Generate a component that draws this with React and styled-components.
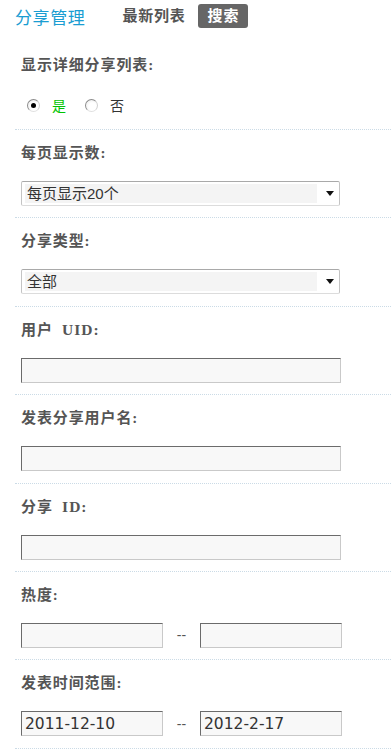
import React from "react";
import styled, { createGlobalStyle } from "styled-components";

const GlobalStyle = createGlobalStyle`
  body {
    margin: 0;
    background: #fff;
    font-family: "Liberation Sans", "Noto Sans CJK SC", sans-serif;
    color: #333;
  }
`;

const Page = styled.div`
  width: 391px;
`;

const Header = styled.div`
  display: flex;
  align-items: center;
  height: 32px;
  padding-left: 15px;
  margin-bottom: 9.6px;
`;

const Title = styled.div`
  font-size: 17px;
  color: #1a9dd2;
  margin-right: 37px;
  letter-spacing: 0.6px;
`;

const Tab = styled.div`
  font-size: 15px;
  font-weight: bold;
  line-height: 24px;
  height: 24px;
  letter-spacing: 0.8px;
  padding: 0 ${(p) => (p.active ? "9px 0 10px" : "0")};
  margin-right: 12px;
  border-radius: 3px;
  color: ${(p) => (p.active ? "#fff" : "#555")};
  background: ${(p) => (p.active ? "#666" : "transparent")};
`;

const Section = styled.div`
  margin-left: 15px;
  padding: 13px 0 11.4px 6px;
  border-bottom: 1px dotted #cbdbe6;
`;

const Label = styled.div`
  font-family: "Liberation Serif", "Noto Sans CJK SC", serif;
  font-size: 15px;
  font-weight: bold;
  line-height: 20px;
  color: #555;
  letter-spacing: 0.9px;
  margin-bottom: 18px;
  white-space: pre;
`;

const Latin = styled.span`
  font-size: 15.5px;
  letter-spacing: 1px;
`;

const RadioRow = styled.div`
  display: flex;
  align-items: center;
  height: 25px;
  padding-left: 6px;
`;

const Radio = styled.span`
  width: 11px;
  height: 11px;
  border-radius: 50%;
  border: 1px solid #8c8c8c;
  border-right-color: #d0d0d0;
  border-bottom-color: #e0e0e0;
  background: radial-gradient(circle at 60% 60%, #fff 40%, #e6e6e6 100%);
  display: flex;
  align-items: center;
  justify-content: center;
  margin-right: 12px;

  &::after {
    content: "";
    width: 5px;
    height: 5px;
    border-radius: 50%;
    background: ${(p) => (p.checked ? "#000" : "transparent")};
  }
`;

const RadioText = styled.span`
  font-size: 14px;
  color: ${(p) => p.color || "#333"};
  margin-right: 19px;
`;

const SelectFrame = styled.div`
  display: flex;
  align-items: stretch;
  width: 314px;
  height: 19px;
  padding: 2px 0 2px 3px;
  border: 1px solid #c4c4c4;
  border-top-color: #a9a9a9;
  border-bottom-color: #dcdcdc;
  border-radius: 2px;
`;

const SelectValue = styled.div`
  width: 290px;
  background: #f4f4f4;
  font-size: 15px;
  line-height: 19px;
  padding-left: 2px;
  color: #333;
`;

const Caret = styled.svg`
  margin-left: 9px;
  align-self: center;
`;

const TextInput = styled.input`
  box-sizing: border-box;
  width: ${(p) => (p.half ? "142px" : "320px")};
  height: 25px;
  margin: 0;
  padding: 0 3px;
  border: 1px solid;
  border-color: #6b6b6b #c9c9c9 #c9c9c9 #6b6b6b;
  background: #f8f8f8;
  font-family: "DejaVu Sans", sans-serif;
  font-size: 15.5px;
  color: #333;
  outline: none;
`;

const RangeRow = styled.div`
  display: flex;
  align-items: center;
`;

const Dash = styled.span`
  width: 37px;
  text-align: center;
  font-size: 14px;
  color: #555;
`;

const Select = ({ value }) => (
  <SelectFrame>
    <SelectValue>{value}</SelectValue>
    <Caret width="8" height="5" viewBox="0 0 8 5">
      <path d="M0 0h8L4 5z" fill="#111" />
    </Caret>
  </SelectFrame>
);

const Range = ({ from = "", to = "" }) => (
  <RangeRow>
    <TextInput half defaultValue={from} />
    <Dash>--</Dash>
    <TextInput half defaultValue={to} />
  </RangeRow>
);

export default function App() {
  return (
    <Page>
      <GlobalStyle />
      <Header>
        <Title>分享管理</Title>
        <Tab>最新列表</Tab>
        <Tab active>搜索</Tab>
      </Header>

      <Section>
        <Label>显示详细分享列表:</Label>
        <RadioRow>
          <Radio checked />
          <RadioText color="#00c400">是</RadioText>
          <Radio />
          <RadioText>否</RadioText>
        </RadioRow>
      </Section>

      <Section>
        <Label>每页显示数:</Label>
        <Select value="每页显示20个" />
      </Section>

      <Section>
        <Label>分享类型:</Label>
        <Select value="全部" />
      </Section>

      <Section>
        <Label>
          {"用户  "}
          <Latin>UID:</Latin>
        </Label>
        <TextInput />
      </Section>

      <Section>
        <Label>发表分享用户名:</Label>
        <TextInput />
      </Section>

      <Section>
        <Label>
          {"分享  "}
          <Latin>ID:</Latin>
        </Label>
        <TextInput />
      </Section>

      <Section>
        <Label>热度:</Label>
        <Range />
      </Section>

      <Section>
        <Label>发表时间范围:</Label>
        <Range from="2011-12-10" to="2012-2-17" />
      </Section>
    </Page>
  );
}
